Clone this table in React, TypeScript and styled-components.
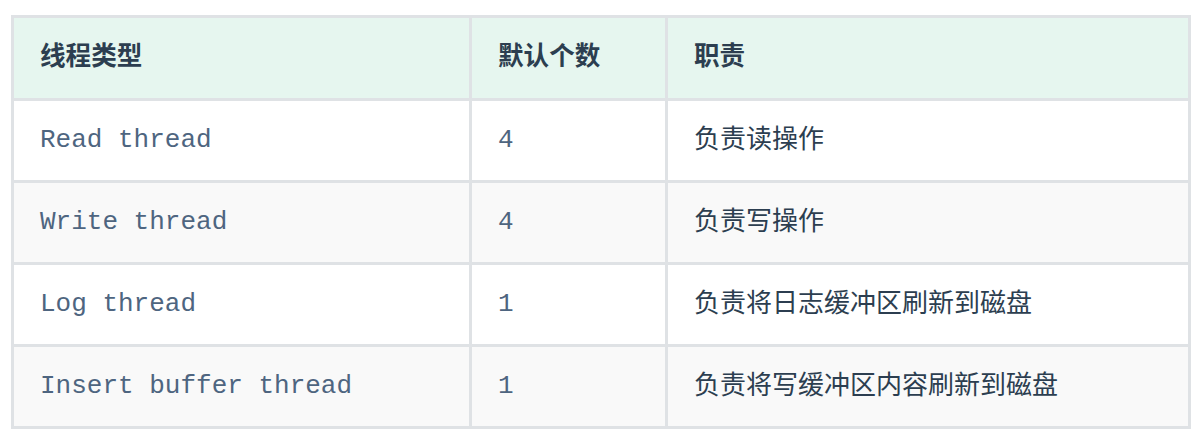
import React from "react";
import styled, { createGlobalStyle } from "styled-components";

const GlobalStyle = createGlobalStyle`
  html, body {
    margin: 0;
    padding: 0;
    background: #ffffff;
  }
`;

interface iROW {
  name: string;
  count: string;
  duty: string;
}

const rows: iROW[] = [
  { name: "Read thread", count: "4", duty: "负责读操作" },
  { name: "Write thread", count: "4", duty: "负责写操作" },
  { name: "Log thread", count: "1", duty: "负责将日志缓冲区刷新到磁盘" },
  { name: "Insert buffer thread", count: "1", duty: "负责将写缓冲区内容刷新到磁盘" },
];

const App: React.FC = () => {
  return (
    <Page>
      <GlobalStyle />
      <Table>
        <colgroup>
          <col style={{ width: 458 }} />
          <col style={{ width: 196 }} />
          <col style={{ width: 523 }} />
        </colgroup>
        <thead>
          <tr>
            <Head>线程类型</Head>
            <Head>默认个数</Head>
            <Head>职责</Head>
          </tr>
        </thead>
        <tbody>
          {rows.map((row, i) => (
            <Row key={row.name} striped={i % 2 === 1}>
              <Cell>
                <Code>{row.name}</Code>
              </Cell>
              <Cell>
                <Code>{row.count}</Code>
              </Cell>
              <Cell>{row.duty}</Cell>
            </Row>
          ))}
        </tbody>
      </Table>
    </Page>
  );
};

export default App;

const Page = styled.div`
  padding: 15px 0 0 11px;
`;

const Table = styled.table`
  width: 1180px;
  table-layout: fixed;
  border-collapse: separate;
  border-spacing: 0;
  border-top: 3px solid #dfe2e5;
  border-left: 3px solid #dfe2e5;
`;

const Head = styled.th`
  box-sizing: border-box;
  height: 83px;
  padding: 0 0 10px 26px;
  text-align: left;
  vertical-align: middle;
  background: #e6f6ef;
  color: #2c3e50;
  font-family: "Noto Sans CJK SC", sans-serif;
  font-weight: 700;
  font-size: 25.6px;
  border-right: 3px solid #dfe2e5;
  border-bottom: 3px solid #dfe2e5;
`;

const Row = styled.tr<{ striped: boolean }>`
  background: ${(p) => (p.striped ? "#f9f9f9" : "#ffffff")};
`;

const Cell = styled.td`
  box-sizing: border-box;
  height: 82px;
  padding: 0 0 9px 26px;
  vertical-align: middle;
  color: #2c3e50;
  font-family: "Noto Sans CJK SC", sans-serif;
  font-size: 26px;
  border-right: 3px solid #dfe2e5;
  border-bottom: 3px solid #dfe2e5;
  white-space: nowrap;
`;

const Code = styled.span`
  font-family: "Liberation Mono", monospace;
  font-size: 26px;
  color: #4e6580;
`;
